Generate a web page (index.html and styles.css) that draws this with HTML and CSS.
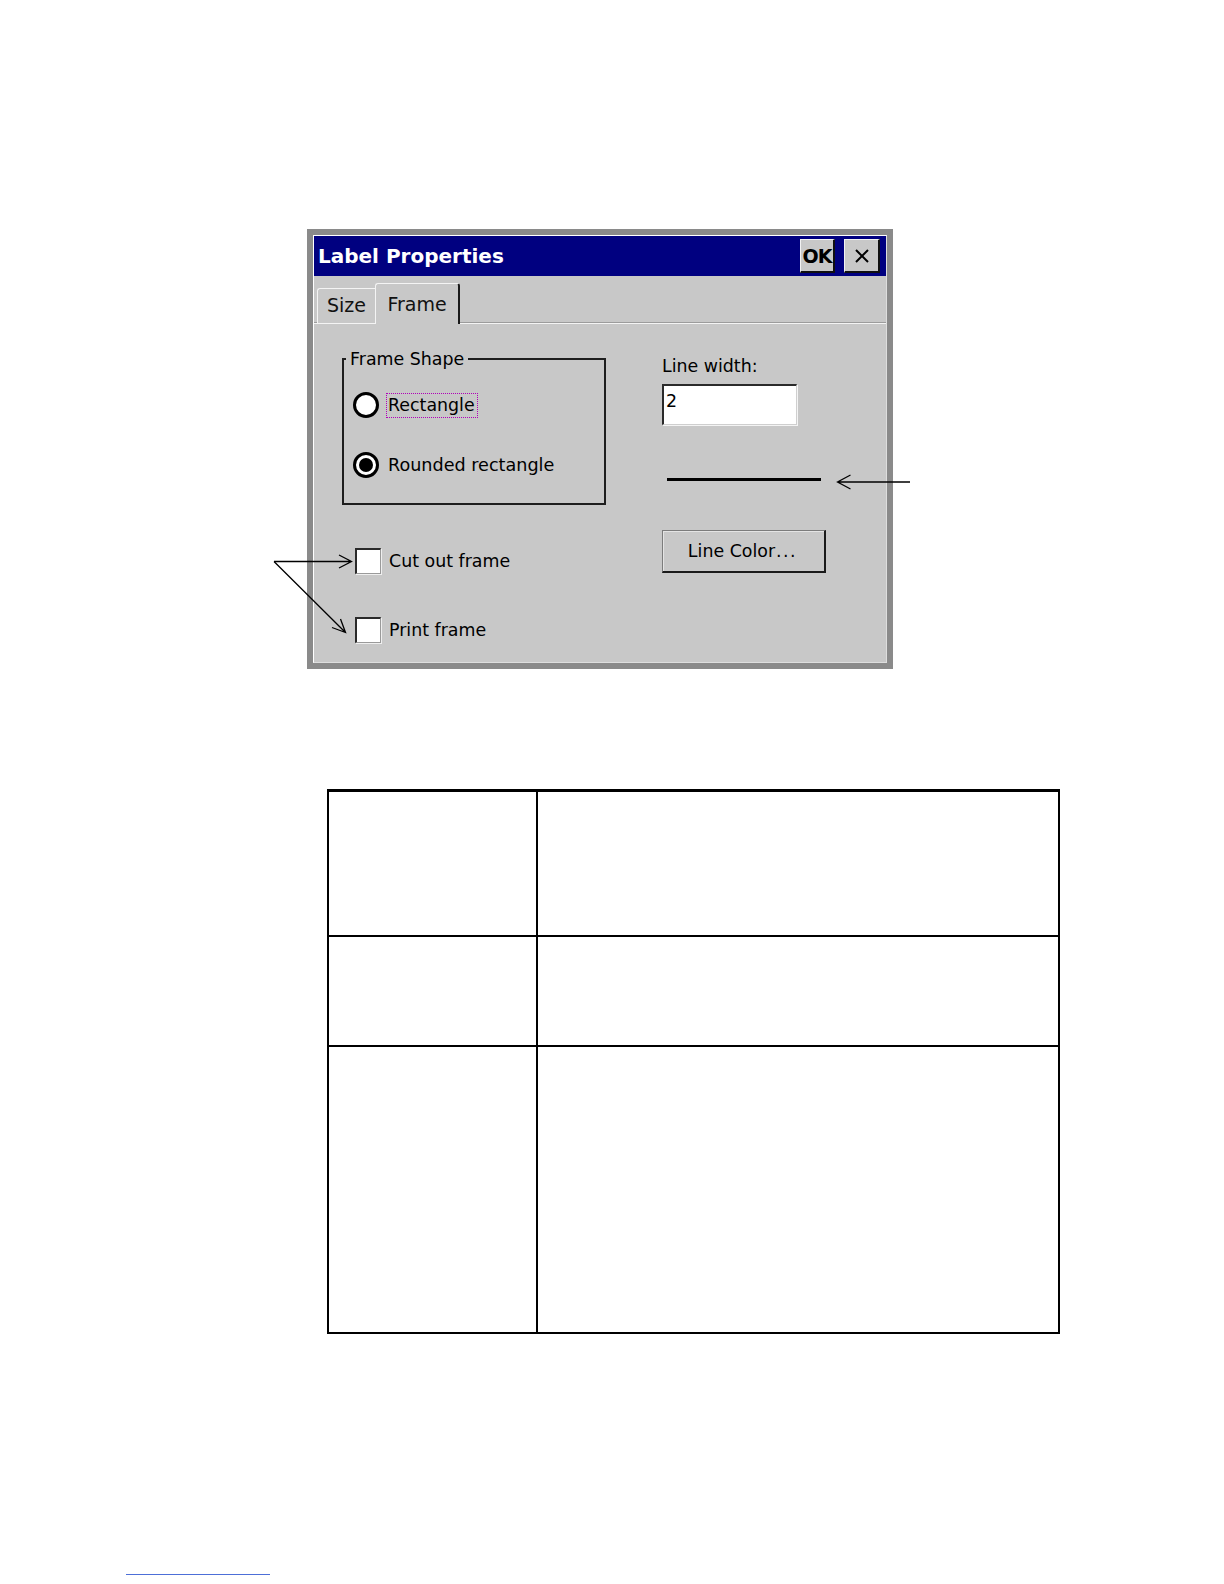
FILE: index.html
```html
<!DOCTYPE html>
<html lang="en">
<head>
<meta charset="utf-8">
<title>Label Properties</title>
<link rel="stylesheet" href="styles.css">
</head>
<body>
<div class="page">
  <div class="dialog">
    <div class="dialog-inner">
      <div class="titlebar">
        <span class="title">Label Properties</span>
        <div class="title-buttons">
          <div class="tbtn ok">OK</div>
          <div class="tbtn close">
            <svg width="18" height="18" viewBox="0 0 18 18"><path d="M3 3L15 15M15 3L3 15" stroke="#000" stroke-width="2" fill="none"/></svg>
          </div>
        </div>
      </div>
      <div class="tabs">
        <div class="tab">Size</div>
        <div class="tab active">Frame</div>
      </div>
      <div class="panel">
        <div class="col-left">
          <div class="group">
            <div class="group-title">Frame Shape</div>
            <div class="opt first"><span class="radio"></span><span class="focus">Rectangle</span></div>
            <div class="opt second"><span class="radio checked"></span><span class="opt-text">Rounded rectangle</span></div>
          </div>
          <div class="check-row first"><span class="checkbox"></span><span>Cut out frame</span></div>
          <div class="check-row second"><span class="checkbox"></span><span>Print frame</span></div>
        </div>
        <div class="col-right">
          <div class="field-label">Line width:</div>
          <div class="textbox">2</div>
          <div class="preview-line"></div>
          <div class="btn">Line Color<span class="dots">...</span></div>
        </div>
      </div>
    </div>
  </div>

  <div class="doc-table">
    <div class="cell"></div><div class="cell"></div>
    <div class="cell"></div><div class="cell"></div>
    <div class="cell"></div><div class="cell"></div>
  </div>

  <div class="footnote-rule"></div>

  <svg class="annotations" width="1224" height="1584" viewBox="0 0 1224 1584">
    <g stroke="#000" stroke-width="1.3" fill="none">
      <path d="M274 561.5L351.5 561.5M339 555L351.5 561.5L339 568"/>
      <path d="M274 561.5L345.5 632.5M340.5 619L345.5 632.5L332 627.5"/>
      <path d="M910 482L837.5 482M850.5 475L837.5 482L850.5 489"/>
    </g>
  </svg>
</div>
</body>
</html>
```

FILE: styles.css
```css
html, body {
  margin: 0;
  padding: 0;
  background: #fff;
}

.page {
  position: relative;
  min-height: 1584px;
  padding-top: 229px;
  box-sizing: border-box;
  font-family: "DejaVu Sans", "Liberation Sans", sans-serif;
  color: #000;
}

.dialog {
  margin-left: 307px;
  width: 586px;
  box-sizing: border-box;
  border: 6px solid #8a8a8a;
  background: #c8c8c8;
}

.dialog-inner {
  border-top: 1px solid #ffffff;
  border-left: 1px solid #ffffff;
  border-right: 1px solid #dedede;
  border-bottom: 1px solid #dedede;
}

.titlebar {
  height: 40px;
  background: #000080;
  display: flex;
  align-items: center;
  justify-content: space-between;
  padding: 0 6px 0 4px;
}

.title {
  color: #fff;
  font-weight: bold;
  font-size: 20px;
}

.title-buttons {
  display: flex;
  gap: 9px;
}

.tbtn {
  height: 34px;
  box-sizing: border-box;
  background: #c8c8c8;
  border-style: solid;
  border-width: 1px 2px 2px 1px;
  border-color: #f2f2f2 #101010 #101010 #f2f2f2;
  display: flex;
  align-items: center;
  justify-content: center;
}

.tbtn.ok {
  width: 35px;
  font-weight: bold;
  font-size: 19px;
  letter-spacing: -1px;
}

.tbtn.close {
  width: 36px;
}

.tabs {
  height: 47px;
  display: flex;
  align-items: flex-end;
  padding-left: 3px;
  border-bottom: 1px solid #f4f4f4;
  box-shadow: inset 0 -1px 0 #9c9c9c;
  font-size: 19px;
}

.tab {
  height: 35px;
  box-sizing: border-box;
  width: 58px;
  display: flex;
  align-items: center;
  justify-content: center;
  padding-bottom: 3px;
  border-top: 1px solid #f4f4f4;
  border-left: 1px solid #f4f4f4;
  border-top-left-radius: 3px;
  background: #c8c8c8;
  color: #111;
}

.tab.active {
  height: 41px;
  width: 85px;
  margin-bottom: -1px;
  padding-bottom: 0;
  border-right: 2px solid #1a1a1a;
  border-top-right-radius: 3px;
  position: relative;
}

.panel {
  height: 338px;
  box-sizing: border-box;
  padding: 34px 0 0 28px;
  display: grid;
  grid-template-columns: 264px auto;
  column-gap: 56px;
  align-items: start;
  font-size: 17.4px;
}

.group {
  border: 2px solid #1e1e1e;
  padding: 0 0 25px 9px;
}

.group-title {
  width: fit-content;
  margin: -11px 0 0 -7px;
  padding: 0 4px;
  line-height: 20px;
  background: #c8c8c8;
}

.opt {
  height: 26px;
  display: flex;
  align-items: center;
  gap: 9px;
}

.opt.first { margin-top: 23px; }
.opt.second { margin-top: 34px; }

.radio {
  width: 26px;
  height: 26px;
  box-sizing: border-box;
  border-radius: 50%;
  border: 3px solid #000;
  background: #fff;
  display: flex;
  align-items: center;
  justify-content: center;
}

.radio.checked::after {
  content: "";
  width: 14px;
  height: 14px;
  border-radius: 50%;
  background: #000;
}

.focus {
  border: 1px dotted #b000b8;
  padding: 0 2px 0 1px;
  margin-left: -2px;
  line-height: 23px;
}

.opt-text {
  font-size: 17.6px;
}

.check-row {
  height: 26px;
  display: flex;
  align-items: center;
  gap: 8px;
  padding-left: 13px;
}

.check-row.first { margin-top: 43px; }
.check-row.second { margin-top: 43px; }

.checkbox {
  width: 26px;
  height: 26px;
  box-sizing: border-box;
  background: #fff;
  border-style: solid;
  border-width: 2px 1px 1px 2px;
  border-color: #2a2a2a #9a9a9a #9a9a9a #2a2a2a;
  box-shadow: 1px 1px 0 #efefef;
}

.field-label {
  margin-top: -2px;
  line-height: 20px;
}

.textbox {
  margin-top: 8px;
  width: 135px;
  height: 41px;
  box-sizing: border-box;
  background: #fff;
  border-style: solid;
  border-width: 2px 1px 1px 2px;
  border-color: #2a2a2a #cfcfcf #cfcfcf #2a2a2a;
  box-shadow: 1px 1px 0 #f4f4f4;
  padding: 5px 0 0 2px;
  line-height: 20px;
}

.preview-line {
  margin: 53px 0 0 5px;
  width: 154px;
  height: 3px;
  background: #000;
}

.btn {
  margin-top: 49px;
  width: 164px;
  height: 43px;
  box-sizing: border-box;
  border-style: solid;
  border-width: 1px 2px 2px 1px;
  border-color: #7c7c7c #1a1a1a #1a1a1a #7c7c7c;
  box-shadow: inset 1px 1px 0 #e4e4e4;
  display: flex;
  align-items: center;
  justify-content: center;
  padding-right: 2px;
}

.dots {
  letter-spacing: 1.5px;
  margin-left: 1px;
}

.doc-table {
  margin: 120px 0 0 327px;
  width: 733px;
  box-sizing: border-box;
  display: grid;
  grid-template-columns: 209px 1fr;
  grid-template-rows: 145px 110px 287px;
  border-top: 3px solid #000;
  border-left: 2px solid #000;
}

.cell {
  border-right: 2px solid #000;
  border-bottom: 2px solid #000;
}

.footnote-rule {
  margin: 240px 0 0 126px;
  width: 144px;
  height: 1px;
  background: #4d6fd8;
}

.annotations {
  position: absolute;
  top: 0;
  left: 0;
  pointer-events: none;
}
```
